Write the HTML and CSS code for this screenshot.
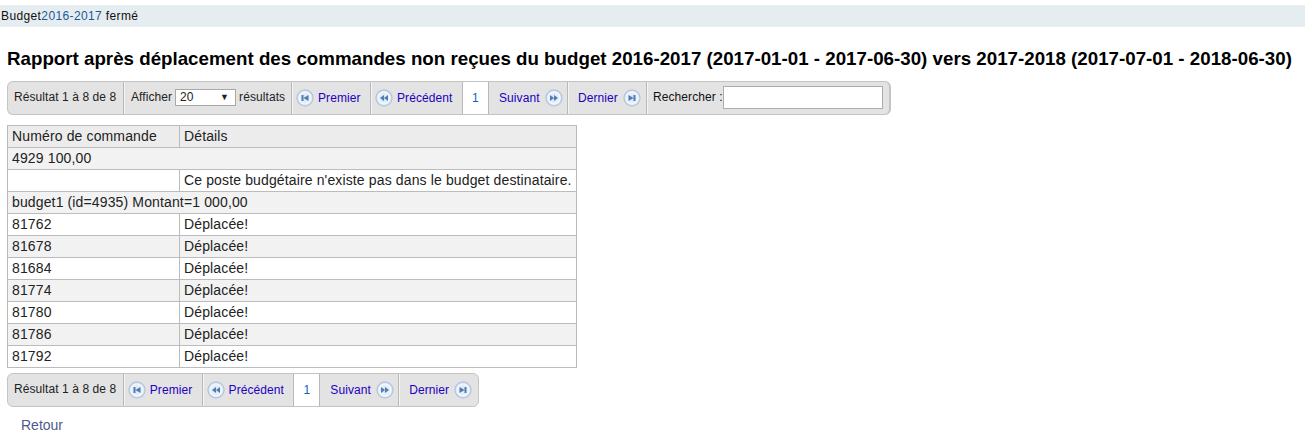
FILE: index.html
```html
<!DOCTYPE html>
<html lang="fr">
<head>
<meta charset="utf-8">
<title>Rapport</title>
<link rel="stylesheet" href="styles.css">
</head>
<body>
<svg class="defs" width="0" height="0" aria-hidden="true">
  <defs>
    <radialGradient id="disc" cx="50%" cy="50%" r="50%">
      <stop offset="0" stop-color="#d9e6f5"/><stop offset="0.55" stop-color="#e6eef8"/><stop offset="0.72" stop-color="#f7fafd"/><stop offset="0.88" stop-color="#bfd0e6"/><stop offset="1" stop-color="#9db4d2"/>
    </radialGradient>
    <symbol id="first" viewBox="0 0 18 18"><circle cx="9" cy="9" r="8.500" fill="url(#disc)"/><path d="M5.500 6h2v6h-2zM12.500 6v6L7.500 9z" fill="#4f7db5"/></symbol>
    <symbol id="prev" viewBox="0 0 18 18"><circle cx="9" cy="9" r="8.500" fill="url(#disc)"/><path d="M9 6v6L5 9zM13 6v6L9 9z" fill="#4f7db5"/></symbol>
    <symbol id="next" viewBox="0 0 18 18"><circle cx="9" cy="9" r="8.500" fill="url(#disc)"/><path d="M5 6v6l4-3zM9 6v6l4-3z" fill="#4f7db5"/></symbol>
    <symbol id="last" viewBox="0 0 18 18"><circle cx="9" cy="9" r="8.500" fill="url(#disc)"/><path d="M5.500 6v6l5-3zM10.500 6h2v6h-2z" fill="#4f7db5"/></symbol>
  </defs>
</svg>

<div class="status">Budget<a class="status-link" href="#">2016-2017</a> fermé</div>

<h1 class="title">Rapport après déplacement des commandes non reçues du budget 2016-2017 (2017-01-01 - 2017-06-30) vers 2017-2018 (2017-07-01 - 2018-06-30)</h1>

<div class="pager pager-top">
  <span class="cell info">Résultat 1 à 8 de 8</span>
  <span class="cell show">Afficher <span class="select"><span>20</span><span class="caret">▼</span></span> résultats</span>
  <a class="cell nav first" href="#"><svg class="ico"><use href="#first"/></svg>Premier</a>
  <a class="cell nav prev" href="#"><svg class="ico"><use href="#prev"/></svg>Précédent</a>
  <span class="cell current">1</span>
  <a class="cell nav next" href="#">Suivant<svg class="ico"><use href="#next"/></svg></a>
  <a class="cell nav last" href="#">Dernier<svg class="ico"><use href="#last"/></svg></a>
  <span class="cell search">Rechercher :<span class="input"></span></span>
</div>

<table class="report">
  <thead><tr><th class="c1">Numéro de commande</th><th>Détails</th></tr></thead>
  <tbody>
    <tr class="alt"><td colspan="2">4929 100,00</td></tr>
    <tr><td></td><td>Ce poste budgétaire n'existe pas dans le budget destinataire.</td></tr>
    <tr class="alt"><td colspan="2">budget1 (id=4935) Montant=1 000,00</td></tr>
    <tr><td>81762</td><td>Déplacée!</td></tr>
    <tr class="alt"><td>81678</td><td>Déplacée!</td></tr>
    <tr><td>81684</td><td>Déplacée!</td></tr>
    <tr class="alt"><td>81774</td><td>Déplacée!</td></tr>
    <tr><td>81780</td><td>Déplacée!</td></tr>
    <tr class="alt"><td>81786</td><td>Déplacée!</td></tr>
    <tr><td>81792</td><td>Déplacée!</td></tr>
  </tbody>
</table>

<div class="pager pager-bottom">
  <span class="cell info">Résultat 1 à 8 de 8</span>
  <a class="cell nav first" href="#"><svg class="ico"><use href="#first"/></svg>Premier</a>
  <a class="cell nav prev" href="#"><svg class="ico"><use href="#prev"/></svg>Précédent</a>
  <span class="cell current">1</span>
  <a class="cell nav next" href="#">Suivant<svg class="ico"><use href="#next"/></svg></a>
  <a class="cell nav last" href="#">Dernier<svg class="ico"><use href="#last"/></svg></a>
</div>

<a class="back" href="#">Retour</a>
</body>
</html>
```

FILE: styles.css
```css
* { box-sizing: border-box; }
html, body { margin: 0; padding: 0; }
body {
  font-family: "Liberation Sans", Arial, sans-serif;
  font-size: 12px;
  color: #000;
  background: #fff;
  padding-top: 5px;
  height: 438px;
  overflow: hidden;
}
a { text-decoration: none; }
.defs { position: absolute; }

.status {
  height: 22px;
  line-height: 22px;
  background: #e6edf0;
  padding-left: 1px;
  font-size: 12px;
  letter-spacing: 0.38px;
  color: #111;
}
.status-link { color: #1a5a96; }

.title {
  margin: 21px 0 0 7px;
  font-size: 18.72px;
  line-height: 22px;
  letter-spacing: 0.015px;
  font-weight: bold;
  white-space: nowrap;
  color: #000;
}

.pager {
  display: flex;
  align-items: stretch;
  height: 34px;
  margin-left: 7px;
  background: #e3e3e3;
  border: 1px solid #c4c4c4;
  border-radius: 6px;
  font-size: 12px;
  line-height: 30px;
  letter-spacing: 0.08px;
}
.pager-top { margin-top: 11px; width: 884px; border-right-width: 2px; }
.pager-bottom { margin-top: 5px; width: 472px; }

.cell {
  display: flex;
  align-items: center;
  white-space: nowrap;
  border-right: 1px solid #b9b9b9;
  box-shadow: 1px 0 0 #f4f4f4;
  color: #222;
}
.info { width: 116px; padding-left: 6px; padding-bottom: 2px; }
.show { width: 168px; padding-left: 7px; padding-bottom: 2px; gap: 3px; }
.select {
  display: flex;
  justify-content: space-between;
  align-items: center;
  width: 61px;
  height: 17px;
  padding: 0 4px;
  background: #fff;
  border: 1px solid #a9a9a9;
  line-height: 15px;
}
.caret { font-size: 9px; color: #222; padding-right: 2px; }

.nav { color: #2200c1; gap: 4px; }
.first { width: 79px; padding-left: 4px; }
.prev { width: 92px; padding-left: 4px; }
.next { width: 79px; padding-left: 10px; gap: 5px; }
.last { width: 79px; padding-left: 10px; gap: 5px; }
.current {
  width: 26px;
  justify-content: center;
  background: #fff;
  color: #0f62c4;
  box-shadow: none;
}
.search { padding-left: 6px; border-right: 0; box-shadow: none; padding-bottom: 2px; color: #111; }
.input {
  display: block;
  width: 160px;
  height: 23px;
  background: #fff;
  border: 1px solid #adadad;
}
.ico { width: 18px; height: 18px; flex: none; }

.pager-bottom .last { border-right: 0; box-shadow: none; }

.report {
  margin: 10px 0 0 7px;
  width: 570px;
  border-collapse: collapse;
  table-layout: fixed;
  font-size: 14px;
  letter-spacing: 0.135px;
  color: #222;
}
.report th, .report td {
  height: 22px;
  padding: 0 4px 1px;
  border: 1px solid #bcbcbc;
  font-weight: normal;
  text-align: left;
  line-height: 20px;
  white-space: nowrap;
}
.report th { background: #ececec; }
.report .c1 { width: 172px; }
.alt td { background: #f2f2f2; }

.back {
  display: block;
  margin: 10px 0 0 21px;
  font-size: 14px;
  line-height: 16px;
  color: #4c5a8c;
}
```
